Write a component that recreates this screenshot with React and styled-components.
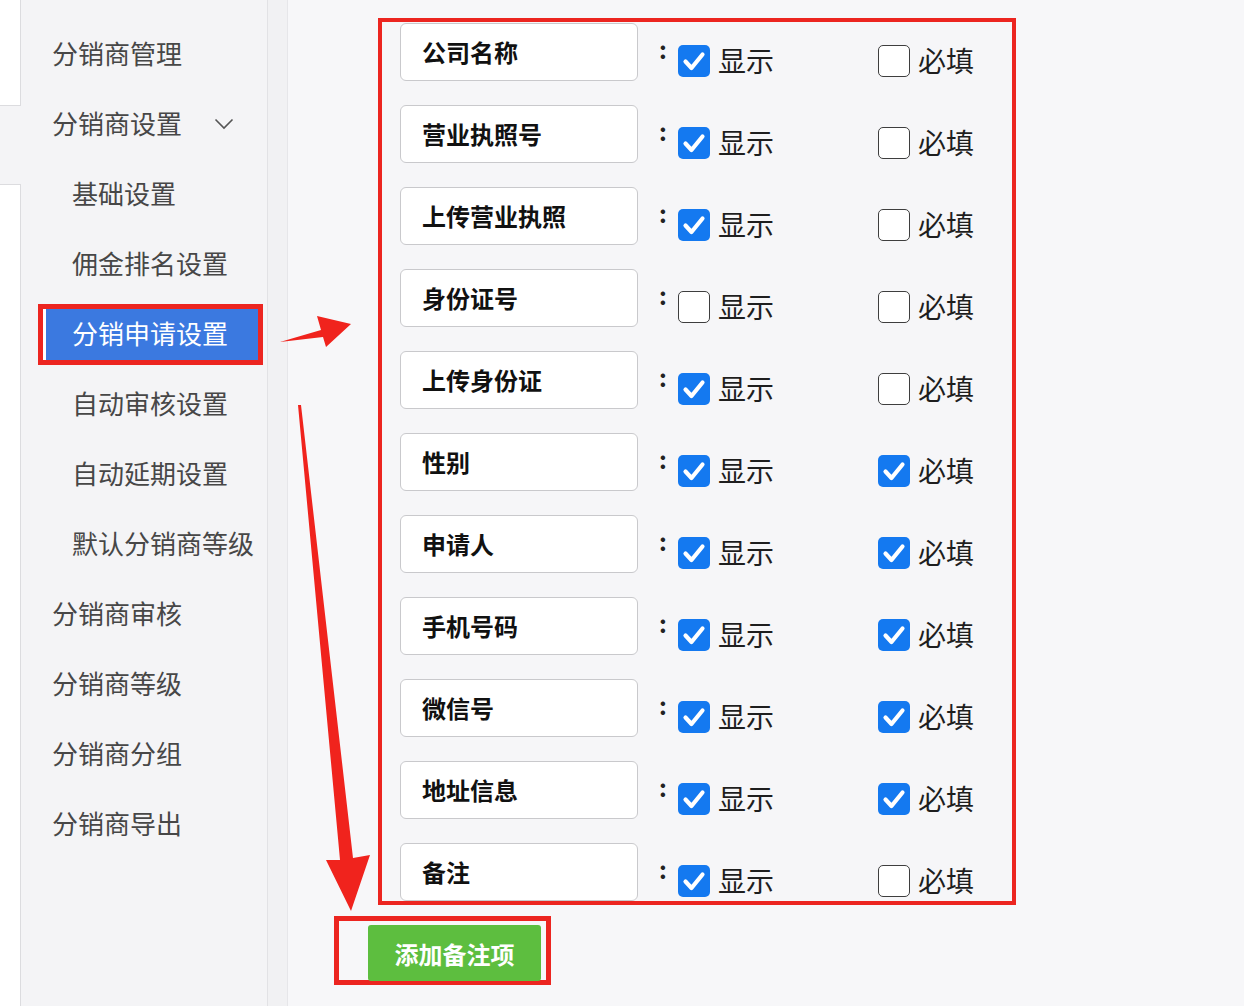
import React from 'react';
import styled, { createGlobalStyle } from 'styled-components';

const GlobalStyle = createGlobalStyle`
	html, body {
		margin: 0;
		padding: 0;
		background: #f7f7f9;
	}
	body {
		font-family: "Noto Sans CJK SC", "Noto Sans", sans-serif;
	}
`;

const navItems = [
	{ label: '分销商管理', level: 0 },
	{ label: '分销商设置', level: 0, arrow: true },
	{ label: '基础设置', level: 1 },
	{ label: '佣金排名设置', level: 1 },
	{ label: '分销申请设置', level: 1, active: true },
	{ label: '自动审核设置', level: 1 },
	{ label: '自动延期设置', level: 1 },
	{ label: '默认分销商等级', level: 1 },
	{ label: '分销商审核', level: 0 },
	{ label: '分销商等级', level: 0 },
	{ label: '分销商分组', level: 0 },
	{ label: '分销商导出', level: 0 },
];

const fields = [
	{ name: '公司名称', show: true, required: false },
	{ name: '营业执照号', show: true, required: false },
	{ name: '上传营业执照', show: true, required: false },
	{ name: '身份证号', show: false, required: false },
	{ name: '上传身份证', show: true, required: false },
	{ name: '性别', show: true, required: true },
	{ name: '申请人', show: true, required: true },
	{ name: '手机号码', show: true, required: true },
	{ name: '微信号', show: true, required: true },
	{ name: '地址信息', show: true, required: true },
	{ name: '备注', show: true, required: false },
];

const Checkbox = ({ checked }) => (
	<Box $checked={checked}>
		{checked && (
			<svg width='32' height='32' viewBox='0 0 32 32'>
				<path
					d='M7.5 16.5 L13.5 23 L24.5 9.5'
					fill='none'
					stroke='#fff'
					strokeWidth='4.2'
					strokeLinecap='round'
					strokeLinejoin='round'
				/>
			</svg>
		)}
	</Box>
);

const App = () => {
	return (
		<Page>
			<GlobalStyle />
			<LeftEdge>
				<EdgeCardTop />
				<EdgeGap />
				<EdgeCardBottom />
			</LeftEdge>
			<Sidebar>
				{navItems.map((item) =>
					item.active ? (
						<ActiveItem key={item.label}>{item.label}</ActiveItem>
					) : (
						<NavItem key={item.label} $level={item.level}>
							{item.label}
							{item.arrow && (
								<Chevron width='20' height='12' viewBox='0 0 20 12'>
									<polyline
										points='1.5,1.5 10,10 18.5,1.5'
										fill='none'
										stroke='#555'
										strokeWidth='1.6'
									/>
								</Chevron>
							)}
						</NavItem>
					)
				)}
			</Sidebar>
			<Strip />
			<Content>
				<FieldBox>
					{fields.map((field) => (
						<Row key={field.name}>
							<NameInput>{field.name}</NameInput>
							<Colon>:</Colon>
							<CheckGroup $width={200}>
								<Checkbox checked={field.show} />
								<CheckLabel>显示</CheckLabel>
							</CheckGroup>
							<CheckGroup>
								<Checkbox checked={field.required} />
								<CheckLabel>必填</CheckLabel>
							</CheckGroup>
						</Row>
					))}
				</FieldBox>
				<ButtonFrame>
					<AddButton>添加备注项</AddButton>
				</ButtonFrame>
			</Content>
			<Arrows width='1244' height='1006' viewBox='0 0 1244 1006'>
				<polygon
					points='280,342 321,330 317,316 351,324 326,347 323,337'
					fill='#f0231d'
				/>
				<polygon
					points='298,405 301,405 353,858 370,855 351,911 326,860 340,860'
					fill='#f0231d'
				/>
			</Arrows>
		</Page>
	);
};

const Page = styled.div`
	position: relative;
	display: flex;
	width: 1244px;
	height: 1006px;
	overflow: hidden;
	background: #f7f7f9;
`;

const LeftEdge = styled.div`
	width: 21px;
	display: flex;
	flex-direction: column;
	background: #f4f4f6;
`;

const EdgeCardTop = styled.div`
	height: 105px;
	background: #fff;
	border-right: 1px solid #dcdcdf;
	border-bottom: 1px solid #dcdcdf;
`;

const EdgeGap = styled.div`
	height: 78px;
`;

const EdgeCardBottom = styled.div`
	flex: 1;
	background: #fff;
	border-right: 1px solid #dcdcdf;
	border-top: 1px solid #dcdcdf;
`;

const Sidebar = styled.div`
	width: 246px;
	padding-top: 17px;
	background: #f4f4f6;
	border-right: 1px solid #e2e2e5;
	display: flex;
	flex-direction: column;
`;

const NavItem = styled.div`
	height: 70px;
	display: flex;
	align-items: center;
	padding-left: ${(p) => (p.$level ? 51 : 31)}px;
	font-size: 26px;
	color: #474747;
	white-space: nowrap;
`;

const Chevron = styled.svg`
	margin-left: 32px;
	margin-top: 4px;
`;

const ActiveItem = styled.div`
	height: 61px;
	box-sizing: border-box;
	margin: 7px 4px 2px 17px;
	border: 5px solid #ec2520;
	box-shadow: inset 3px 0 0 #fff;
	background: #3b79e0;
	display: flex;
	align-items: center;
	padding: 0 0 4px 29px;
	font-size: 26px;
	color: #fff;
	white-space: nowrap;
`;

const Strip = styled.div`
	width: 19px;
	background: #f1f1f3;
	border-right: 1px solid #e6e6e9;
`;

const Content = styled.div`
	flex: 1;
	padding: 18px 0 0 90px;
	display: flex;
	flex-direction: column;
	align-items: flex-start;
`;

const FieldBox = styled.div`
	width: 638px;
	height: 887px;
	box-sizing: border-box;
	border: 4px solid #ec2520;
	padding: 1px 0 0 18px;
	display: flex;
	flex-direction: column;
	gap: 24px;
	overflow: hidden;
	background: #f6f6f8;
`;

const Row = styled.div`
	display: flex;
	align-items: flex-start;
	flex-shrink: 0;
`;

const NameInput = styled.div`
	width: 238px;
	height: 58px;
	box-sizing: border-box;
	flex-shrink: 0;
	background: #fff;
	border: 1px solid #c9c9cc;
	border-radius: 6px;
	padding: 0 0 2px 21px;
	display: flex;
	align-items: center;
	font-size: 24px;
	font-weight: 700;
	color: #111;
`;

const Colon = styled.span`
	margin: 11px 0 0 21px;
	width: 19px;
	font-size: 24px;
	font-weight: 700;
	line-height: 30px;
	color: #222;
`;

const CheckGroup = styled.div`
	width: ${(p) => (p.$width ? `${p.$width}px` : 'auto')};
	margin-top: 22px;
	display: flex;
	align-items: center;
	gap: 8px;
`;

const Box = styled.div`
	width: 32px;
	height: 32px;
	box-sizing: border-box;
	border-radius: 5px;
	background: ${(p) => (p.$checked ? '#1479f0' : '#fff')};
	border: ${(p) => (p.$checked ? 'none' : '1.5px solid #3e3e3e')};
	display: flex;
	align-items: center;
	justify-content: center;
`;

const CheckLabel = styled.span`
	font-size: 28px;
	line-height: 30px;
	padding-bottom: 2px;
	color: #1e1e1e;
`;

const ButtonFrame = styled.div`
	margin: 11px 0 0 -44px;
	width: 217px;
	height: 69px;
	box-sizing: border-box;
	border: 5px solid #ec2520;
	padding: 4px 0 0 29px;
`;

const AddButton = styled.div`
	width: 173px;
	height: 56px;
	background: #5dbe3f;
	border-radius: 3px;
	display: flex;
	align-items: center;
	justify-content: center;
	font-size: 24px;
	font-weight: 700;
	color: #fff;
`;

const Arrows = styled.svg`
	position: absolute;
	left: 0;
	top: 0;
	pointer-events: none;
`;

export default App;
